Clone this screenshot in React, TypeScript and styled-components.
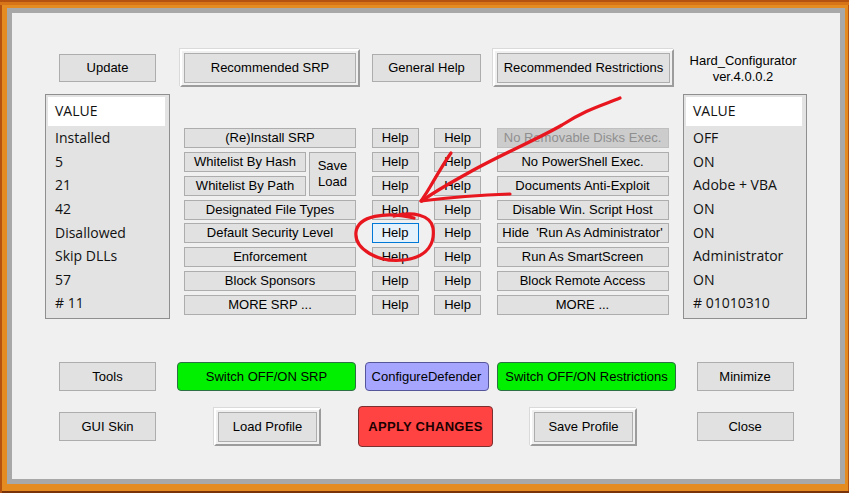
import React from "react";
import styled, { createGlobalStyle, css } from "styled-components";

const Global = createGlobalStyle`
  html, body { margin: 0; padding: 0; background: #f0f0f0; }
  * { box-sizing: border-box; }
`;

const Frame = styled.div`
  position: relative;
  width: 849px;
  height: 493px;
  padding: 8px 4px 9px 7px;
  background: #e48b22;
  box-shadow: inset 0 2px 0 #b5520f, inset 0 5px 0 #d87418, inset 2px 0 0 #b5520f,
    inset 0 -2px 0 #7a3208, inset -1px 0 0 #b5520f;
`;

const Window = styled.div`
  height: 100%;
  border: 5px solid #a8a8a8;
  background: #f0f0f0;
  padding: 36px 0 0 33px;
  font-family: "Liberation Sans", Arial, sans-serif;
  font-size: 13px;
  color: #000;
`;

const Band = styled.div<{ $top: number; $h: number }>`
  display: grid;
  grid-template-columns: 125px 499px 124px;
  column-gap: 7px;
  height: ${(p) => p.$h}px;
  margin-top: ${(p) => p.$top}px;
  align-items: center;
`;

const Cell = styled.div<{ $align?: string }>`
  height: 100%;
  display: flex;
  align-items: ${(p) => p.$align || "center"};
  justify-content: center;
`;

const MidRow = styled.div<{ $gap: number; $pad: number }>`
  height: 100%;
  display: flex;
  align-items: center;
  gap: ${(p) => p.$gap}px;
  padding-left: ${(p) => p.$pad}px;
`;

type Variant = "normal" | "focus" | "disabled" | "green" | "blue" | "red";

const variants: Record<Variant, ReturnType<typeof css>> = {
  normal: css`
    background: #e1e1e1;
    border: 1px solid #adadad;
  `,
  focus: css`
    background: #e5f1fb;
    border: 1px solid #0078d7;
  `,
  disabled: css`
    background: #cccccc;
    border: 1px solid #bfbfbf;
    color: #8f8f8f;
  `,
  green: css`
    background: #00f000;
    border: 1px solid #2f6f45;
    border-radius: 4px;
  `,
  blue: css`
    background: #a6a6ff;
    border: 1px solid #55559a;
    border-radius: 4px;
  `,
  red: css`
    background: #ff4242;
    border: 1px solid #7a3030;
    border-radius: 4px;
    font-weight: bold;
    color: #1a0000;
    letter-spacing: 0.3px;
  `,
};

const Btn = styled.button<{ $w?: number; $h?: number; $v?: Variant }>`
  width: ${(p) => (p.$w ? `${p.$w}px` : "100%")};
  height: ${(p) => (p.$h ? `${p.$h}px` : "100%")};
  padding: 0;
  margin: 0;
  display: flex;
  align-items: center;
  justify-content: center;
  font-family: "Liberation Sans", Arial, sans-serif;
  font-size: 13px;
  line-height: 16px;
  color: #000;
  white-space: pre;
  overflow: hidden;
  ${(p) => variants[p.$v || "normal"]}
`;

const Raised = styled.div<{ $w: number; $h: number }>`
  width: ${(p) => p.$w}px;
  height: ${(p) => p.$h}px;
  padding: 2px;
  border-style: solid;
  border-width: 2px;
  border-color: #ffffff #9c9c9c #9c9c9c #ffffff;
  box-shadow: -1px -1px 0 #dadada;
  background: #f0f0f0;
`;

const Title = styled.div`
  text-align: center;
  line-height: 16px;
  padding-right: 4px;
  padding-top: 2px;
`;

const List = styled.div`
  width: 100%;
  height: 100%;
  border: 1px solid #8f8f8f;
  background: #e3e3e3;
  padding: 2px 4px 2px 2px;
  font-family: "Open Sans", "Noto Sans", sans-serif;
  font-size: 14px;
  color: #111;
`;

const ListHead = styled.div`
  height: 29px;
  background: #ffffff;
  display: flex;
  align-items: center;
  padding: 0 0 2px 7px;
`;

const ListRow = styled.div`
  height: 23.6px;
  display: flex;
  align-items: center;
  padding-left: 7px;
  white-space: nowrap;
`;

const Panel = styled.div`
  height: 100%;
  display: flex;
  gap: 15.5px;
  padding: 34px 0 0 7px;
`;

const SrpGrid = styled.div`
  width: 172px;
  display: grid;
  grid-template-columns: 122px 47px;
  grid-auto-rows: 20px;
  column-gap: 3px;
  row-gap: 3.85px;
`;

const Span = styled.div<{ $rows?: number; $cols?: number }>`
  grid-column: span ${(p) => p.$cols || 1};
  grid-row: span ${(p) => p.$rows || 1};
`;

const Col = styled.div<{ $w: number }>`
  width: ${(p) => p.$w}px;
  display: grid;
  grid-auto-rows: 20px;
  row-gap: 3.85px;
`;

const Overlay = styled.svg`
  position: absolute;
  left: 0;
  top: 0;
  pointer-events: none;
`;

const leftVals = ["Installed", "5", "21", "42", "Disallowed", "Skip DLLs", "57", "# 11"];
const rightVals = ["OFF", "ON", "Adobe + VBA", "ON", "ON", "Administrator", "ON", "# 01010310"];
const restrictions = [
  "No PowerShell Exec.",
  "Documents Anti-Exploit",
  "Disable Win. Script Host",
  "Hide  'Run As Administrator'",
  "Run As SmartScreen",
  "Block Remote Access",
  "MORE ...",
];

function ValueList({ values }: { values: string[] }) {
  return (
    <List>
      <ListHead>VALUE</ListHead>
      {values.map((v, i) => (
        <ListRow key={i}>{v}</ListRow>
      ))}
    </List>
  );
}

export default function App() {
  return (
    <>
      <Global />
      <Frame>
        <Window>
          <Band $top={0} $h={38}>
            <Cell>
              <Btn $w={97} $h={28}>Update</Btn>
            </Cell>
            <MidRow $gap={12} $pad={3}>
              <Raised $w={180} $h={38}>
                <Btn>Recommended SRP</Btn>
              </Raised>
              <Btn $w={109} $h={28}>General Help</Btn>
              <Raised $w={181} $h={38}>
                <Btn>Recommended Restrictions</Btn>
              </Raised>
            </MidRow>
            <Title>
              Hard_Configurator
              <br />
              ver.4.0.0.2
            </Title>
          </Band>

          <Band $top={7} $h={225}>
            <ValueList values={leftVals} />
            <Panel>
              <SrpGrid>
                <Span $cols={2}><Btn>(Re)Install SRP</Btn></Span>
                <Span><Btn>Whitelist By Hash</Btn></Span>
                <Span $rows={2}><Btn>{"Save\nLoad"}</Btn></Span>
                <Span><Btn>Whitelist By Path</Btn></Span>
                <Span $cols={2}><Btn>Designated File Types</Btn></Span>
                <Span $cols={2}><Btn>Default Security Level</Btn></Span>
                <Span $cols={2}><Btn>Enforcement</Btn></Span>
                <Span $cols={2}><Btn>Block Sponsors</Btn></Span>
                <Span $cols={2}><Btn>MORE SRP ...</Btn></Span>
              </SrpGrid>
              <Col $w={47}>
                {Array.from({ length: 8 }).map((_, i) => (
                  <Btn key={i} $v={i === 4 ? "focus" : "normal"}>Help</Btn>
                ))}
              </Col>
              <Col $w={47}>
                {Array.from({ length: 8 }).map((_, i) => (
                  <Btn key={i}>Help</Btn>
                ))}
              </Col>
              <Col $w={172}>
                <Btn $v="disabled">No Removable Disks Exec.</Btn>
                {restrictions.map((r) => (
                  <Btn key={r}>{r}</Btn>
                ))}
              </Col>
            </Panel>
            <ValueList values={rightVals} />
          </Band>

          <Band $top={43} $h={29}>
            <Cell>
              <Btn $w={97} $h={29}>Tools</Btn>
            </Cell>
            <MidRow $gap={8.5} $pad={0}>
              <Btn $w={179} $h={29} $v="green">Switch OFF/ON SRP</Btn>
              <Btn $w={124} $h={29} $v="blue">ConfigureDefender</Btn>
              <Btn $w={179} $h={29} $v="green">Switch OFF/ON Restrictions</Btn>
            </MidRow>
            <Cell>
              <Btn $w={97} $h={29}>Minimize</Btn>
            </Cell>
          </Band>

          <Band $top={15} $h={41}>
            <Cell>
              <Btn $w={97} $h={29}>GUI Skin</Btn>
            </Cell>
            <MidRow $gap={37} $pad={37}>
              <Raised $w={107} $h={38}>
                <Btn>Load Profile</Btn>
              </Raised>
              <Btn $w={135} $h={41} $v="red">APPLY CHANGES</Btn>
              <Raised $w={107} $h={38}>
                <Btn>Save Profile</Btn>
              </Raised>
            </MidRow>
            <Cell>
              <Btn $w={97} $h={29}>Close</Btn>
            </Cell>
          </Band>
        </Window>

        <Overlay width={849} height={493} viewBox="0 0 849 493">
          <g fill="none" stroke="#e8161e" strokeWidth={3.2} strokeLinecap="round" strokeLinejoin="round">
            <path d="M 620 98 C 600 106, 585 110, 562 125 C 540 138, 500 155, 470 172 C 450 183, 432 193, 422 201" />
            <path d="M 451 153 C 444 163, 437 175, 430 187 C 426 194, 423 198, 421 201" />
            <path d="M 421 201 C 445 198, 480 195, 510 194" />
            <path d="M 414 218 C 385 211, 358 216, 356 232 C 354 249, 378 263, 404 260 C 429 257, 435 242, 433 228 C 431 215, 412 211, 394 216" />
          </g>
        </Overlay>
      </Frame>
    </>
  );
}
